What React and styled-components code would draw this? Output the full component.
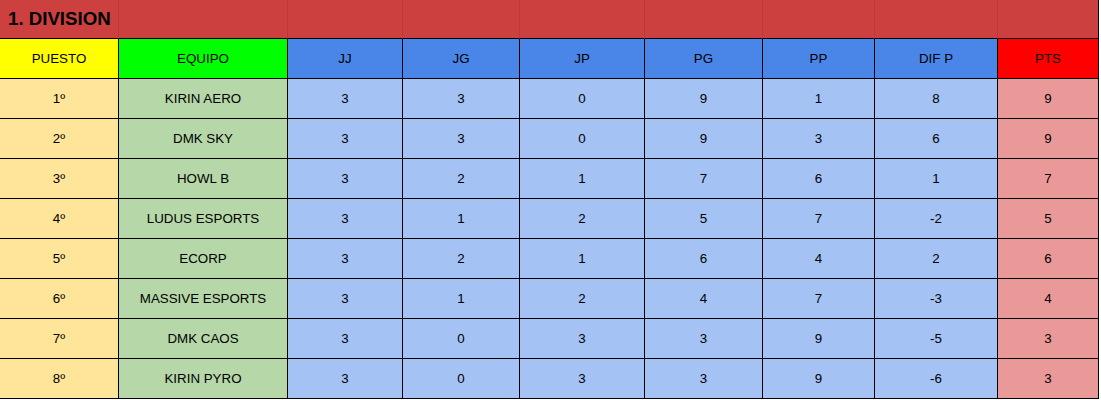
import React from "react";
import styled, { createGlobalStyle } from "styled-components";

const GlobalStyle = createGlobalStyle`
  body {
    margin: 0;
    background: #fff;
    font-family: "Liberation Sans", Arial, sans-serif;
  }
`;

const COLS = "119px 169px 115px 117px 125px 118px 112px 123px 101px";

const Grid = styled.div`
  display: grid;
  grid-template-columns: ${COLS};
  width: 1099px;
`;

const TitleCell = styled.div`
  height: 38px;
  background: #cc4040;
  border-right: 1px solid ${(p) => (p.last ? "#000" : "rgba(0, 0, 0, 0.09)")};
  border-bottom: 1px solid #000;
  position: relative;
`;

const TitleText = styled.span`
  position: absolute;
  left: 8px;
  top: 0;
  line-height: 37px;
  font-size: 14pt;
  font-weight: bold;
  color: #000;
  white-space: nowrap;
`;

const Cell = styled.div`
  height: 39px;
  display: flex;
  align-items: center;
  justify-content: center;
  background: ${(p) => p.bg};
  border-right: 1px solid #000;
  border-bottom: 1px solid #000;
  font-size: 10pt;
  color: #000;
  white-space: nowrap;
`;

const HEAD = [
  ["PUESTO", "#ffff00"],
  ["EQUIPO", "#00ff00"],
  ["JJ", "#4a86e8"],
  ["JG", "#4a86e8"],
  ["JP", "#4a86e8"],
  ["PG", "#4a86e8"],
  ["PP", "#4a86e8"],
  ["DIF P", "#4a86e8"],
  ["PTS", "#ff0000"],
];

const BODY_COLORS = [
  "#ffe599",
  "#b6d7a8",
  "#a4c2f4",
  "#a4c2f4",
  "#a4c2f4",
  "#a4c2f4",
  "#a4c2f4",
  "#a4c2f4",
  "#ea9999",
];

const rows = [
  ["1º", "KIRIN AERO", 3, 3, 0, 9, 1, 8, 9],
  ["2º", "DMK SKY", 3, 3, 0, 9, 3, 6, 9],
  ["3º", "HOWL B", 3, 2, 1, 7, 6, 1, 7],
  ["4º", "LUDUS ESPORTS", 3, 1, 2, 5, 7, -2, 5],
  ["5º", "ECORP", 3, 2, 1, 6, 4, 2, 6],
  ["6º", "MASSIVE ESPORTS", 3, 1, 2, 4, 7, -3, 4],
  ["7º", "DMK CAOS", 3, 0, 3, 3, 9, -5, 3],
  ["8º", "KIRIN PYRO", 3, 0, 3, 3, 9, -6, 3],
];

export default function App() {
  return (
    <>
      <GlobalStyle />
      <Grid>
        {HEAD.map((h, i) => (
          <TitleCell key={"t" + i} last={i === HEAD.length - 1}>
            {i === 0 && <TitleText>1. DIVISION</TitleText>}
          </TitleCell>
        ))}
        {HEAD.map(([label, bg]) => (
          <Cell key={label} bg={bg}>
            {label}
          </Cell>
        ))}
        {rows.map((r, ri) =>
          r.map((v, ci) => (
            <Cell key={ri + "-" + ci} bg={BODY_COLORS[ci]}>
              {v}
            </Cell>
          ))
        )}
      </Grid>
    </>
  );
}
